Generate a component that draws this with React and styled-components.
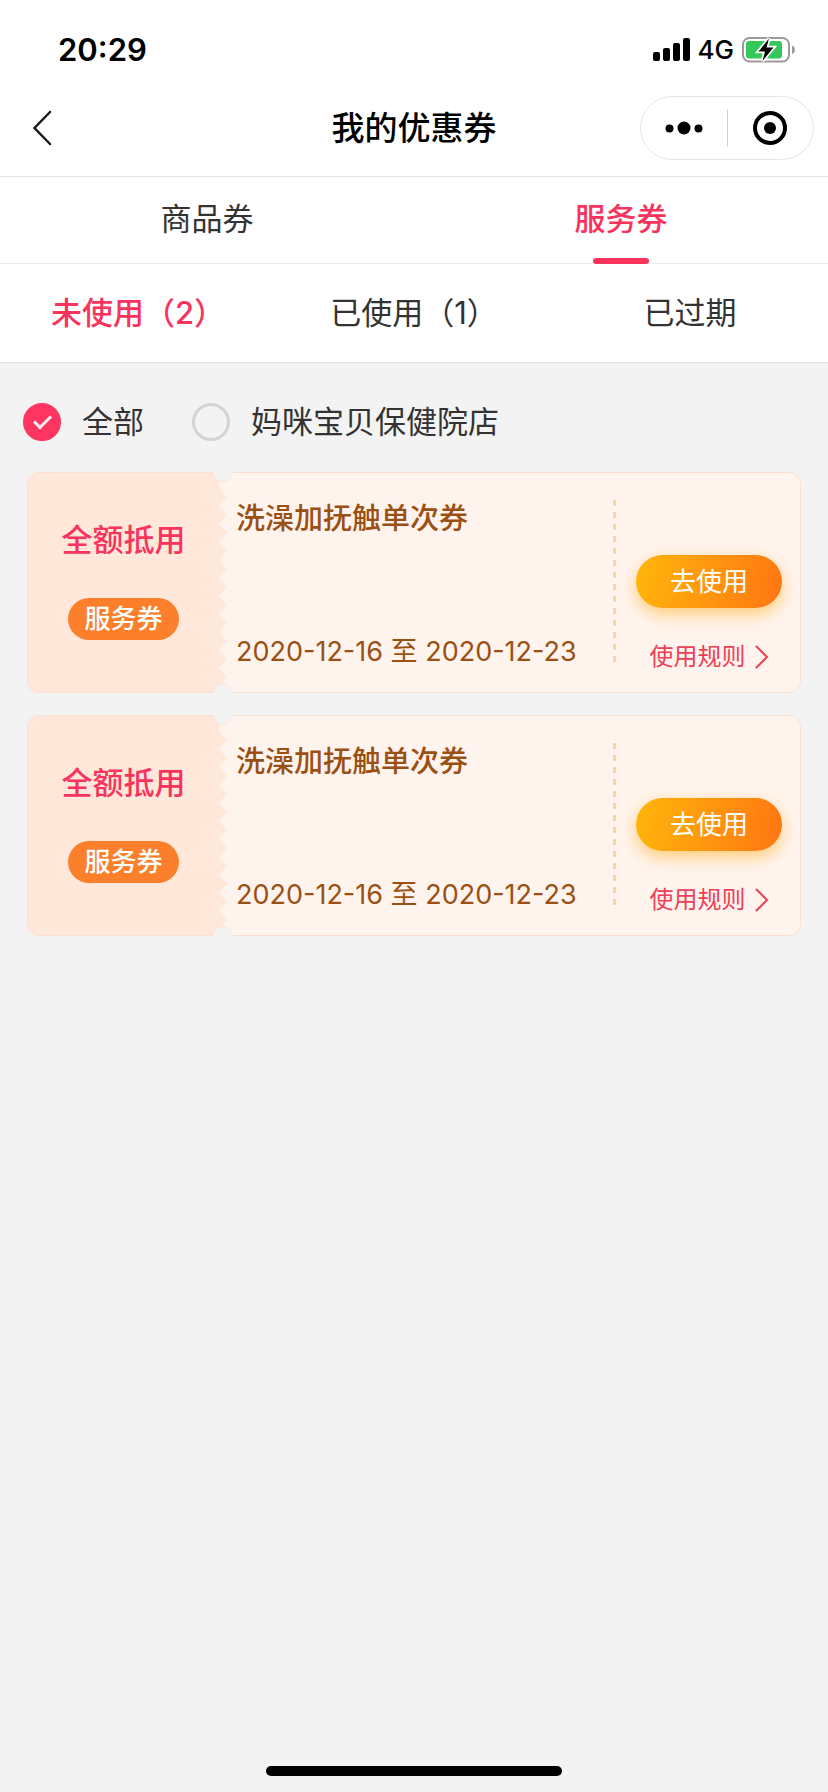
import React, { useState } from "react";
import styled, { createGlobalStyle, css } from "styled-components";

const sans = `Inter, "Noto Sans CJK SC", sans-serif`;

const GlobalStyle = createGlobalStyle`
  *, *::before, *::after { box-sizing: border-box; }
  body {
    margin: 0;
    background: #f3f3f3;
    color: #333;
    font-family: ${sans};
    font-size: 31px;
    line-height: 44px;
  }
  button, input { font: inherit; color: inherit; }
`;

const Page = styled.div`
  display: flex;
  flex-direction: column;
  min-height: 100vh;
`;

const StatusBar = styled.div`
  display: flex;
  justify-content: space-between;
  align-items: center;
  height: 80px;
  padding: 20px 32px 0 58px;
  background: #fff;
  color: #000;
`;

const Clock = styled.time`
  font-size: 31px;
  font-weight: 600;
`;

const Indicators = styled.div`
  display: flex;
  align-items: center;
  gap: 8px;
`;

const Network = styled.span`
  font-size: 26px;
  font-weight: 500;
`;

const NavBar = styled.header`
  display: grid;
  grid-template-columns: 1fr auto 1fr;
  align-items: center;
  height: 97px;
  padding: 0 14px;
  background: #fff;
  border-bottom: 1px solid #e6e6e6;
`;

const IconButton = styled.button`
  display: flex;
  align-items: center;
  justify-content: center;
  padding: 0;
  border: 0;
  background: none;
  cursor: pointer;
`;

const BackButton = styled(IconButton)`
  width: 56px;
  height: 64px;
`;

const PageTitle = styled.h1`
  margin: 0;
  color: #000;
  font-size: 33px;
  font-weight: 500;
`;

const Capsule = styled.div`
  justify-self: end;
  display: grid;
  grid-template-columns: 1fr 1px 1fr;
  align-items: center;
  width: 174px;
  height: 64px;
  border: 1px solid #e6e6e6;
  border-radius: 32px;

  ${IconButton} { height: 60px; }
`;

const CapsuleDivider = styled.span`
  height: 38px;
  background: #d2d2d2;
`;

const Tabs = styled.nav`
  display: grid;
  grid-template-columns: repeat(${(p) => p.$columns}, 1fr);
  height: ${(p) => p.$height}px;
  background: #fff;
  border-bottom: 1px solid ${(p) => (p.$strong ? "#dedede" : "#ebebeb")};
`;

const Tab = styled.button`
  position: relative;
  padding: 0 0 ${(p) => (p.$underline ? 3 : 0)}px;
  border: 0;
  background: none;
  cursor: pointer;
  white-space: nowrap;

  ${(p) =>
    p.$active &&
    css`
      color: #f8345e;
      font-weight: 500;
    `}

  ${(p) =>
    p.$active &&
    p.$underline &&
    css`
      &::after {
        content: "";
        position: absolute;
        left: 50%;
        bottom: -1px;
        width: 56px;
        height: 6px;
        margin-left: -28px;
        border-radius: 3px;
        background: #f8345e;
      }
    `}
`;

const Content = styled.main`
  flex: 1;
`;

const StoreFilter = styled.fieldset`
  display: flex;
  gap: 48px;
  margin: 0;
  padding: 37px 23px 28px;
  border: 0;
`;

const StoreOption = styled.label`
  display: flex;
  align-items: center;
  gap: 21px;
  cursor: pointer;
`;

const Radio = styled.input`
  appearance: none;
  width: 38px;
  height: 38px;
  margin: 0;
  border: 3px solid #d4d4d4;
  border-radius: 50%;
  display: grid;
  place-items: center;

  &:checked {
    border-color: #fe3461;
    background: #fe3461;
  }

  &:checked::before {
    content: "";
    width: 17px;
    height: 10px;
    margin-bottom: 5px;
    border: solid #ffeef2;
    border-width: 0 0 3px 3px;
    transform: rotate(-45deg);
  }
`;

const CouponList = styled.ul`
  display: flex;
  flex-direction: column;
  gap: 22px;
  margin: 0;
  padding: 0 27px;
  list-style: none;
`;

const Card = styled.li`
  position: relative;
  display: grid;
  grid-template-columns: 191px 1fr 187px;
  min-height: 221px;
  clip-path: inset(0);
  background: #fff4ed;
  border: 1px solid #fbdfcf;
  border-radius: 12px;
`;

const Notch = styled.span`
  position: absolute;
  left: 185px;
  ${(p) => p.$edge}: -11px;
  width: 20px;
  height: 20px;
  border: 1px solid #f9e6db;
  border-radius: 50%;
  background: #f3f3f3;
`;

const Stub = styled.div`
  display: flex;
  flex-direction: column;
  align-items: center;
  gap: 36px;
  padding-top: 45px;
  border-radius: 11px 0 0 11px;
  background: #ffe8da;
`;

const Discount = styled.strong`
  color: #f8345e;
  font-weight: 500;
`;

const Badge = styled.span`
  padding: 0 16px;
  border-radius: 21px;
  background: #fc7f2b;
  color: #fff;
  font-size: 26px;
  font-weight: 500;
  line-height: 42px;
`;

const Perforation = styled.svg`
  position: absolute;
  left: 191px;
  top: 0;
`;

const Details = styled.div`
  display: flex;
  flex-direction: column;
  justify-content: space-between;
  padding: 24px 0 20px 17px;
  color: #9b5013;
  white-space: nowrap;
`;

const CouponName = styled.h2`
  margin: 0;
  font-size: 29px;
  font-weight: 500;
  line-height: 44px;
`;

const Validity = styled.p`
  margin: 0;
  font-size: 27px;
  line-height: 40px;
`;

const Actions = styled.div`
  position: relative;
  display: flex;
  flex-direction: column;
  align-items: center;
  justify-content: flex-end;
  gap: 31px;
  padding: 0 18px 17px 23px;

  &::before {
    content: "";
    position: absolute;
    left: 0;
    top: 27px;
    width: 3px;
    height: 163px;
    background: repeating-linear-gradient(#f9d4a9 0 6px, transparent 6px 12px);
  }
`;

const UseButton = styled.button`
  width: 146px;
  height: 53px;
  padding: 0;
  border: 0;
  border-radius: 27px;
  background: linear-gradient(100deg, #ffb60a, #ff7613);
  box-shadow: 0 6px 16px #ffa50080;
  color: #fff;
  font-size: 26px;
  line-height: 52px;
  cursor: pointer;
`;

const RulesLink = styled.a`
  display: flex;
  align-items: center;
  gap: 9px;
  color: #ee4058;
  font-size: 24px;
  line-height: 36px;
  text-decoration: none;
  white-space: nowrap;
`;

const HomeArea = styled.footer`
  display: flex;
  justify-content: center;
  padding: 16px 0;
`;

const HomeIndicator = styled.span`
  width: 296px;
  height: 10px;
  border-radius: 5px;
  background: #000;
`;

const coupons = [
  { id: 1, name: "洗澡加抚触单次券", from: "2020-12-16", to: "2020-12-23" },
  { id: 2, name: "洗澡加抚触单次券", from: "2020-12-16", to: "2020-12-23" },
];

const SignalIcon = () => (
  <svg width="37" height="24" viewBox="0 0 37 24" aria-hidden="true">
    <rect x="0" y="14" width="7" height="9" rx="2" />
    <rect x="10" y="10" width="7" height="13" rx="2" />
    <rect x="20" y="5" width="7" height="18" rx="2" />
    <rect x="30" y="0" width="7" height="23" rx="2" />
  </svg>
);

const BatteryIcon = () => (
  <svg width="54" height="26" viewBox="0 0 54 26" aria-hidden="true">
    <rect x="1" y="1" width="46" height="23.5" rx="6.5" fill="none" stroke="#9b9b9b" strokeWidth="2" />
    <path d="M50 8.5c4 1.5 4 7 0 8.5z" fill="#9b9b9b" />
    <rect x="4" y="4" width="36" height="17.5" rx="3" fill="#34c759" />
    <path
      d="M27 1.5 16.5 14.5h6.5L20.5 24 31.5 10.5h-7z"
      fill="#000"
      stroke="#fff"
      strokeWidth="3.5"
      paintOrder="stroke"
    />
  </svg>
);

const BackIcon = () => (
  <svg width="20" height="36" viewBox="0 0 20 36" fill="none" stroke="#1a1a1a" strokeWidth="2.5" aria-hidden="true">
    <path d="M18 2 2.5 18 18 34" strokeLinecap="round" />
  </svg>
);

const MoreIcon = () => (
  <svg width="38" height="14" viewBox="0 0 38 14" aria-hidden="true">
    <circle cx="4.5" cy="7.5" r="4" />
    <circle cx="19" cy="7" r="6.5" />
    <circle cx="33.5" cy="7.5" r="4" />
  </svg>
);

const CloseIcon = () => (
  <svg width="34" height="34" viewBox="0 0 34 34" aria-hidden="true">
    <circle cx="17" cy="17" r="15" fill="none" stroke="#000" strokeWidth="4" />
    <circle cx="17" cy="17" r="6" />
  </svg>
);

const ChevronIcon = () => (
  <svg width="14" height="24" viewBox="0 0 14 24" fill="none" stroke="currentColor" strokeWidth="2" aria-hidden="true">
    <path d="M1.5 1.5 12 12 1.5 22.5" strokeLinecap="round" strokeLinejoin="round" />
  </svg>
);

const toothPitch = 18;
const teeth = Array.from({ length: 11 }, (_, i) => `L0 ${15 + i * toothPitch}L8 ${24 + i * toothPitch}`).join("");

const TornEdge = () => (
  <Perforation width="10" height="219" viewBox="0 0 10 219" aria-hidden="true">
    <path d={`M0 15${teeth}L0 213z`} fill="#ffe8da" />
  </Perforation>
);

function Coupon({ name, from, to }) {
  return (
    <Card>
      <Stub>
        <Discount>全额抵用</Discount>
        <Badge>服务券</Badge>
      </Stub>
      <Details>
        <CouponName>{name}</CouponName>
        <Validity>
          {from} 至 {to}
        </Validity>
      </Details>
      <Actions>
        <UseButton type="button">去使用</UseButton>
        <RulesLink href="#rules">
          使用规则
          <ChevronIcon />
        </RulesLink>
      </Actions>
      <TornEdge />
      <Notch $edge="top" />
      <Notch $edge="bottom" />
    </Card>
  );
}

export default function App() {
  const [kind, setKind] = useState("服务券");
  const [state, setState] = useState("未使用（2）");
  const [store, setStore] = useState("全部");

  return (
    <Page>
      <GlobalStyle />
      <StatusBar>
        <Clock>20:29</Clock>
        <Indicators>
          <SignalIcon />
          <Network>4G</Network>
          <BatteryIcon />
        </Indicators>
      </StatusBar>
      <NavBar>
        <BackButton type="button" aria-label="返回">
          <BackIcon />
        </BackButton>
        <PageTitle>我的优惠券</PageTitle>
        <Capsule>
          <IconButton type="button" aria-label="更多">
            <MoreIcon />
          </IconButton>
          <CapsuleDivider />
          <IconButton type="button" aria-label="关闭">
            <CloseIcon />
          </IconButton>
        </Capsule>
      </NavBar>
      <Tabs $columns={2} $height={87}>
        {["商品券", "服务券"].map((label) => (
          <Tab key={label} type="button" $underline $active={label === kind} onClick={() => setKind(label)}>
            {label}
          </Tab>
        ))}
      </Tabs>
      <Tabs $columns={3} $height={99} $strong>
        {["未使用（2）", "已使用（1）", "已过期"].map((label) => (
          <Tab key={label} type="button" $active={label === state} onClick={() => setState(label)}>
            {label}
          </Tab>
        ))}
      </Tabs>
      <Content>
        <StoreFilter aria-label="门店">
          {["全部", "妈咪宝贝保健院店"].map((label) => (
            <StoreOption key={label}>
              <Radio type="radio" name="store" checked={label === store} onChange={() => setStore(label)} />
              {label}
            </StoreOption>
          ))}
        </StoreFilter>
        <CouponList>
          {coupons.map((c) => (
            <Coupon key={c.id} {...c} />
          ))}
        </CouponList>
      </Content>
      <HomeArea>
        <HomeIndicator />
      </HomeArea>
    </Page>
  );
}
